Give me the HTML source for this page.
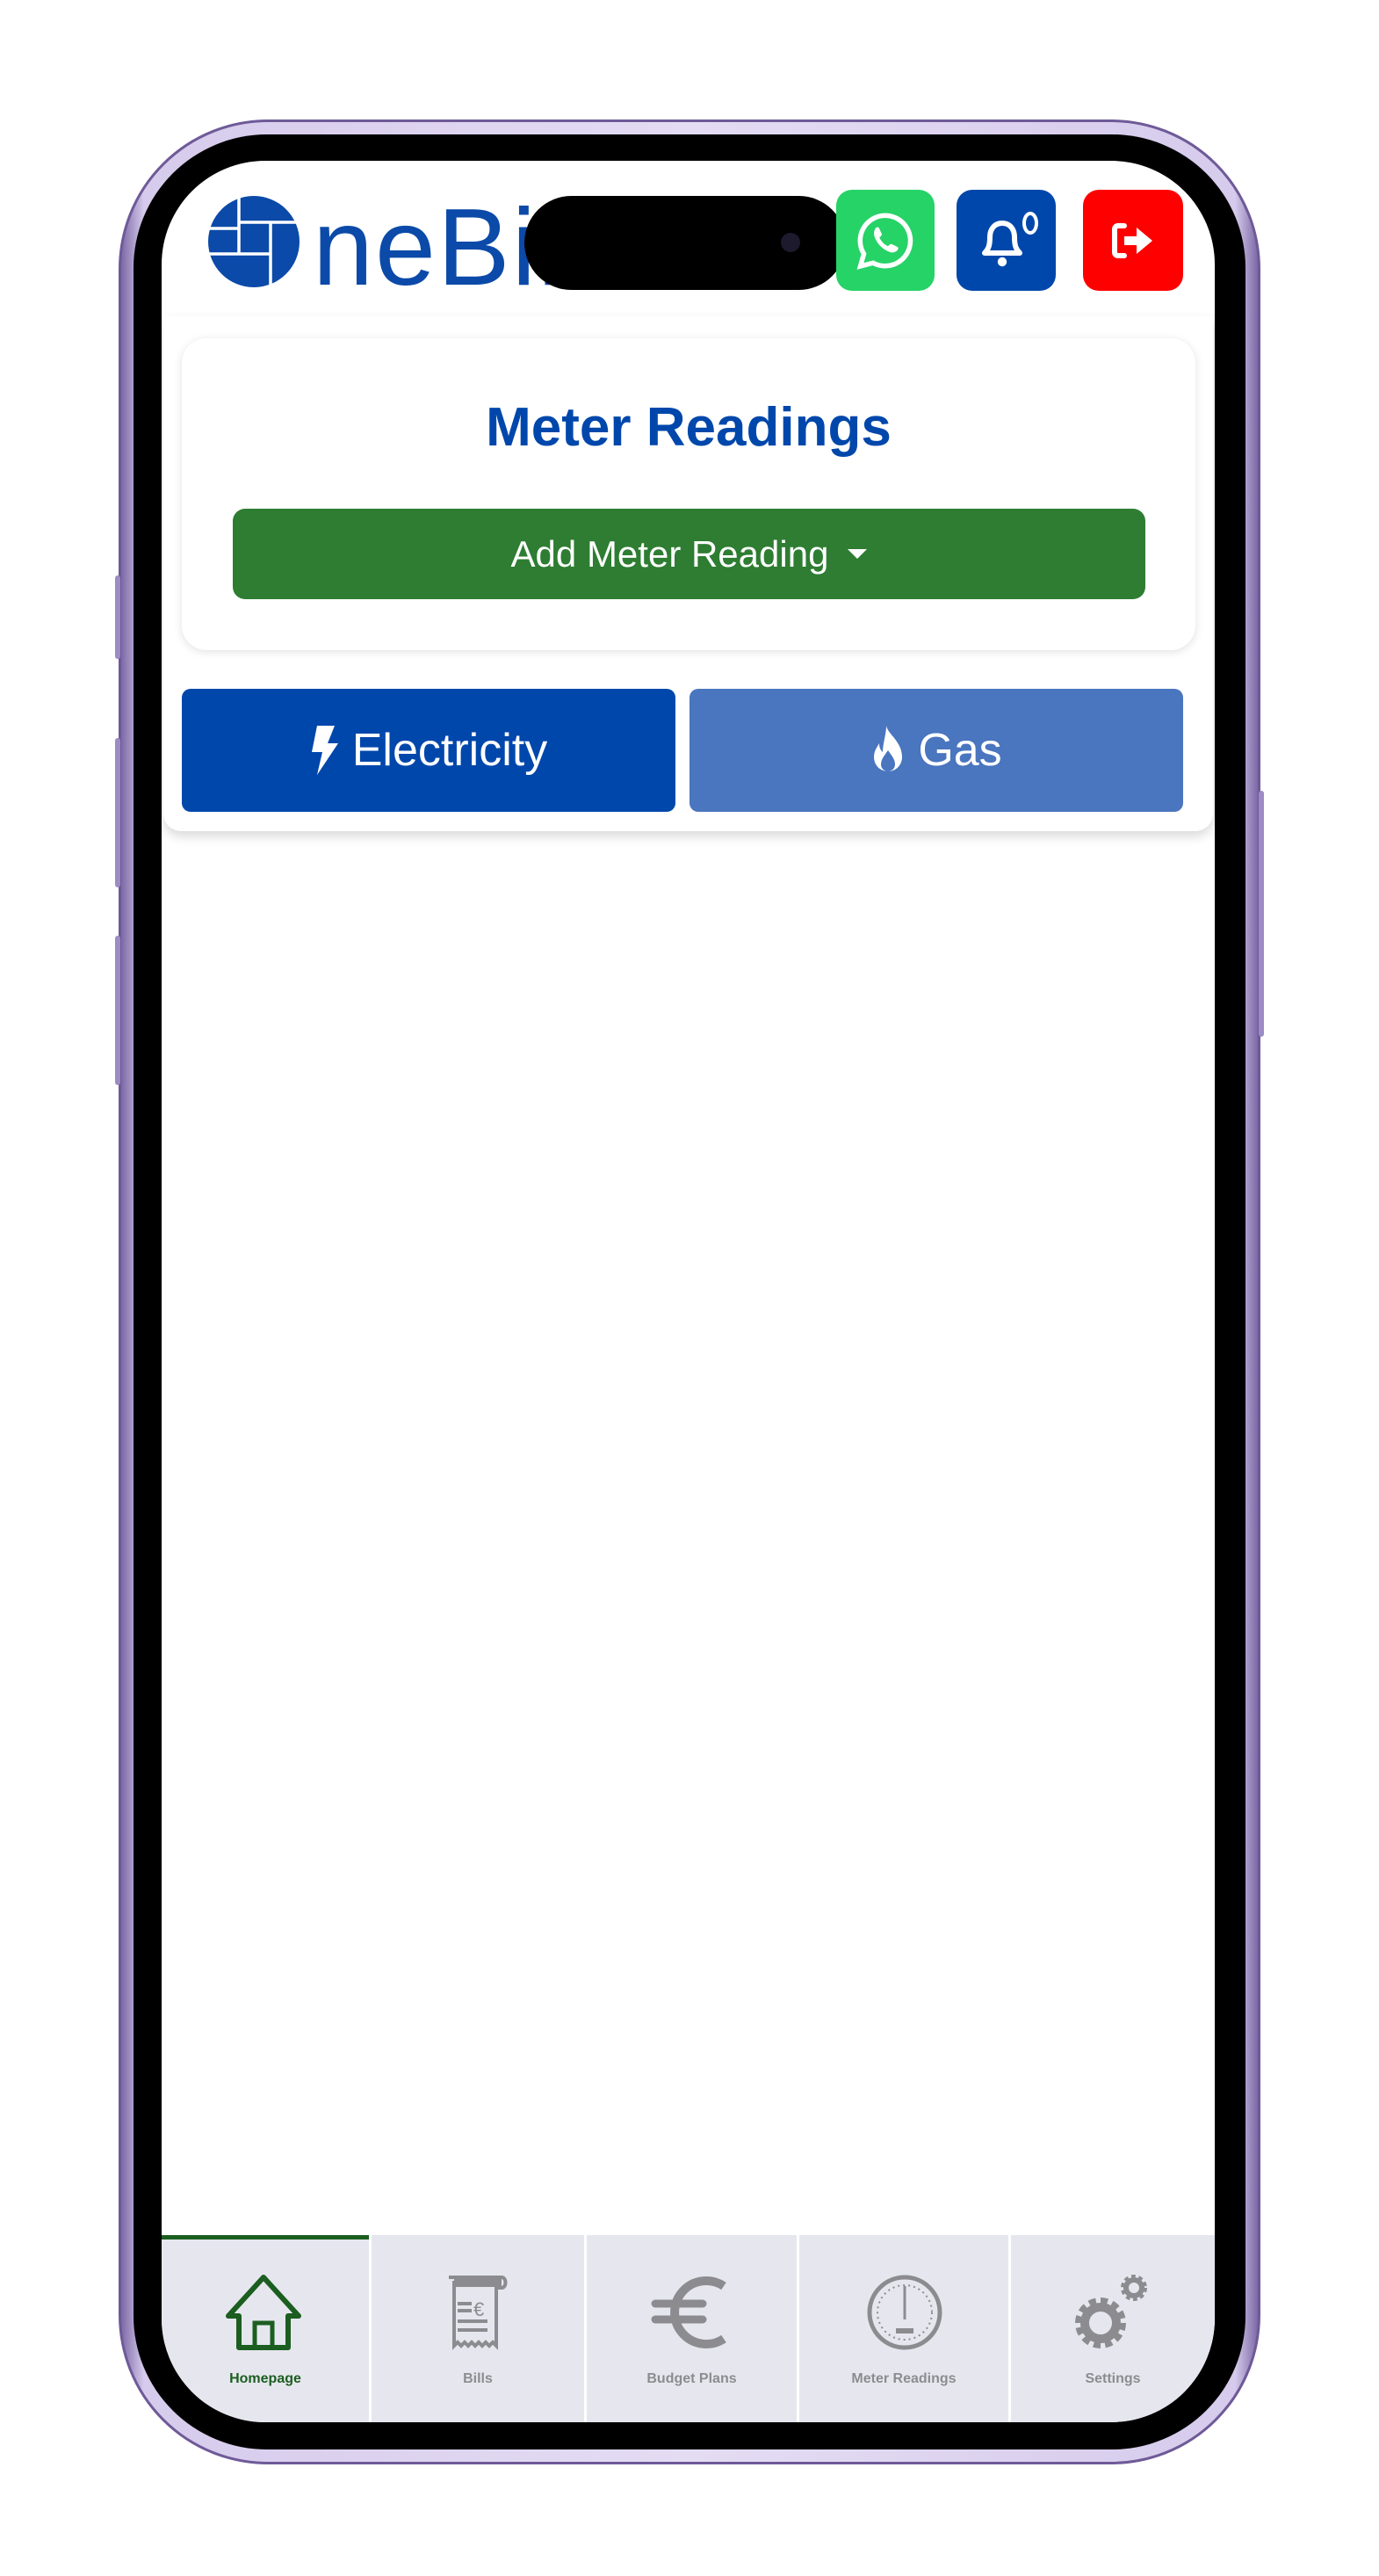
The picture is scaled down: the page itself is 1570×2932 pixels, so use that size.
<!DOCTYPE html>
<html><head><meta charset="utf-8">
<style>
*{margin:0;padding:0;box-sizing:border-box}
html,body{width:1570px;height:2932px;background:#fff;overflow:hidden;font-family:"Liberation Sans",sans-serif}
.abs{position:absolute}
#frame{left:135px;top:136px;width:1300px;height:2669px;border-radius:170px;background:linear-gradient(90deg,#7c68a6,#d6cbec 2%,#e4dcf3 50%,#d6cbec 98%,#7c68a6);border:3px solid #6e5a98}
#bezel{left:152px;top:153px;width:1266px;height:2635px;border-radius:152px;background:#000}
#screen{left:184px;top:183px;width:1199px;height:2574px;border-radius:118px;background:#fff;overflow:hidden}
.btn{position:absolute;border-radius:18px;display:flex;align-items:center;justify-content:center}
.nav{position:absolute;top:2361px;height:214px;background:#e6e7ee}
.lbl{position:absolute;width:100%;text-align:center;top:155px;font-size:16px;font-weight:bold;color:#8c8c90}
</style></head><body>
<div id="frame" class="abs"></div>
<div class="abs" style="left:131px;top:655px;width:6px;height:95px;background:#9c8bc4;border-radius:3px"></div>
<div class="abs" style="left:131px;top:840px;width:6px;height:170px;background:#9c8bc4;border-radius:3px"></div>
<div class="abs" style="left:131px;top:1065px;width:6px;height:170px;background:#9c8bc4;border-radius:3px"></div>
<div class="abs" style="left:1433px;top:900px;width:6px;height:280px;background:#9c8bc4;border-radius:3px"></div>
<div id="bezel" class="abs"></div>
<div id="screen" class="abs">
  <svg class="abs" style="left:53px;top:40px" width="106" height="106" viewBox="0 0 106 106">
    <circle cx="52" cy="52" r="52" fill="#0b4aa8"/>
    <g stroke="#fff" stroke-width="3.5">
      <line x1="35" y1="0" x2="35" y2="66"/>
      <line x1="35" y1="30" x2="106" y2="30"/>
      <line x1="71" y1="30" x2="71" y2="106"/>
      <line x1="0" y1="66" x2="71" y2="66"/>
      <line x1="0" y1="37" x2="35" y2="37"/>
    </g>
  </svg>
  <div class="abs" style="left:172px;top:24px;font-size:124px;line-height:150px;color:#0b4aa8;letter-spacing:2px">neBill</div>
  <div class="abs" style="left:413px;top:40px;width:366px;height:107px;border-radius:54px;background:#000"></div>
  <div class="abs" style="left:705px;top:82px;width:22px;height:22px;border-radius:50%;background:#1d1a2e"></div>
  <div class="btn" style="left:768px;top:33px;width:112px;height:115px;background:#25d366">
    <svg width="80" height="80" viewBox="0 0 32 32"><path d="M16 4.5A11.5 11.5 0 0 0 6.2 22L4.6 27.6l5.8-1.5A11.5 11.5 0 1 0 16 4.5z" fill="none" stroke="#fff" stroke-width="2.2"/><path d="M11.6 10.2c.4-.4 1.2-.5 1.5 0l1.2 2.6c.2.4 0 .8-.3 1.1l-.7.7c.8 1.7 2.2 3.1 3.9 3.9l.7-.7c.3-.3.8-.4 1.1-.2l2.5 1.2c.5.3.4 1.1 0 1.5-.9 1-2.3 1.3-3.6.8-3.2-1.2-5.6-3.600-6.8-6.8-.5-1.3-.3-3 .5-4.1z" fill="#fff"/></svg>
  </div>
  <div class="btn" style="left:905px;top:33px;width:113px;height:115px;background:#0047ab">
    <svg width="90" height="80" viewBox="0 0 45 40"><path d="M10 27c2-2 3-4 3-9 0-5 3-8 7-8s7 3 7 8c0 5 1 7 3 9z" fill="none" stroke="#fff" stroke-width="3" stroke-linejoin="round"/><circle cx="20" cy="32" r="2.6" fill="#fff"/><ellipse cx="36" cy="10" rx="3.5" ry="5.5" fill="none" stroke="#fff" stroke-width="2"/></svg>
  </div>
  <div class="btn" style="left:1049px;top:33px;width:114px;height:115px;background:#ff0000">
    <svg width="52" height="46" viewBox="0 0 26 23"><path d="M8 3H4.5C3 3 2.5 4 2.5 5v13c0 1 .5 2 2 2H8" fill="none" stroke="#fff" stroke-width="3" stroke-linecap="round"/><path d="M8 9h7V4l9 7.5-9 7.5v-5H8z" fill="#fff"/></svg>
  </div>
  <div class="abs" style="left:2px;top:177px;width:1195px;height:586px;border-radius:0 0 20px 20px;background:#fff;box-shadow:0 6px 12px rgba(0,0,0,.15)"></div>
  <div class="abs" style="left:23px;top:202px;width:1154px;height:355px;border-radius:28px;background:#fff;box-shadow:0 2px 10px rgba(0,0,0,.12)"></div>
  <div class="abs" style="left:23px;top:264px;width:1154px;text-align:center;font-size:62px;font-weight:bold;color:#0047ab;line-height:80px">Meter Readings</div>
  <div class="btn" style="left:81px;top:396px;width:1039px;height:103px;border-radius:14px;background:#2e7d32;color:#fff;font-size:42px">Add Meter Reading<span style="display:inline-block;margin-left:22px;border-left:11px solid transparent;border-right:11px solid transparent;border-top:11px solid #fff"></span></div>
  <div class="btn" style="left:23px;top:601px;width:562px;height:140px;border-radius:10px;background:#0047ab;color:#fff;font-size:52px">
    <svg width="34" height="56" viewBox="0 0 17 28" style="margin-right:14px"><path d="M4 0h10l-4 10h6L4 28l3-13H1z" fill="#fff"/></svg>Electricity</div>
  <div class="btn" style="left:601px;top:601px;width:562px;height:140px;border-radius:10px;background:#4a75bf;color:#fff;font-size:52px">
    <svg width="40" height="56" viewBox="0 0 20 28" style="margin-right:14px"><path d="M9 0c1 5 9 9 9 18a8 8 0 0 1-16 0c0-4 2-6 3-8 0 3 1 4 2 5 0-5 2-10 2-15zM10 14c-2 3-4 5-4 8a4 4 0 0 0 8 0c0-3-2-5-4-8z" fill="#fff" fill-rule="evenodd"/></svg>Gas</div>
  <div class="nav" style="left:0;width:236px">
    <div class="abs" style="left:0;top:0;width:236px;height:5px;background:#1b5e20"></div>
    <svg class="abs" style="left:70px;top:44px" width="92" height="88" viewBox="0 0 92 88"><path d="M46 4L6 48h12v36h56V48h12z" fill="none" stroke="#1b5e20" stroke-width="6" stroke-linejoin="round"/><rect x="36" y="56" width="20" height="28" fill="none" stroke="#1b5e20" stroke-width="5"/></svg>
    <div class="lbl" style="color:#1b5e20">Homepage</div>
  </div>
  <div class="nav" style="left:239px;width:242px">
    <svg class="abs" style="left:80px;top:44px" width="80" height="88" viewBox="0 0 80 88"><path d="M8 4h60c6 0 6 12 0 12H62v66l-4-4-4 4-4-4-4 4-4-4-4 4-4-4-4 4-4-4-4 4-4-4-4 4V8" fill="none" stroke="#8c8c90" stroke-width="4"/><rect x="14" y="3" width="54" height="12" fill="#8c8c90"/><path d="M18 34h16M18 42h16M18 54h34M18 64h34" stroke="#8c8c90" stroke-width="4"/><text x="36" y="48" font-size="22" fill="#8c8c90" font-family="Liberation Sans">€</text></svg>
    <div class="lbl">Bills</div>
  </div>
  <div class="nav" style="left:484px;width:239px">
    <svg class="abs" style="left:72px;top:44px" width="96" height="88" viewBox="0 0 96 88"><path d="M84 14A36 36 0 1 0 84 74" fill="none" stroke="#8c8c90" stroke-width="10"/><path d="M6 34h54M6 52h54" stroke="#8c8c90" stroke-width="9" stroke-linecap="round"/></svg>
    <div class="lbl">Budget Plans</div>
  </div>
  <div class="nav" style="left:726px;width:238px">
    <svg class="abs" style="left:76px;top:44px" width="88" height="88" viewBox="0 0 88 88"><circle cx="44" cy="44" r="40" fill="none" stroke="#8c8c90" stroke-width="5"/><circle cx="44" cy="44" r="31" fill="none" stroke="#8c8c90" stroke-width="2" stroke-dasharray="2 4"/><path d="M44 14v38" stroke="#8c8c90" stroke-width="3"/><rect x="34" y="62" width="20" height="6" fill="#8c8c90"/></svg>
    <div class="lbl">Meter Readings</div>
  </div>
  <div class="nav" style="left:967px;width:232px">
    <svg class="abs" style="left:68px;top:42px" width="100" height="92" viewBox="0 0 100 92"><circle cx="34" cy="58" r="22" fill="none" stroke="#8c8c90" stroke-width="14" stroke-dasharray="7 4.5"/><circle cx="34" cy="58" r="18" fill="none" stroke="#8c8c90" stroke-width="10"/><circle cx="72" cy="18" r="11" fill="none" stroke="#8c8c90" stroke-width="8" stroke-dasharray="4 3"/><circle cx="72" cy="18" r="9" fill="none" stroke="#8c8c90" stroke-width="6"/></svg>
    <div class="lbl">Settings</div>
  </div>
</div>
</body></html>
